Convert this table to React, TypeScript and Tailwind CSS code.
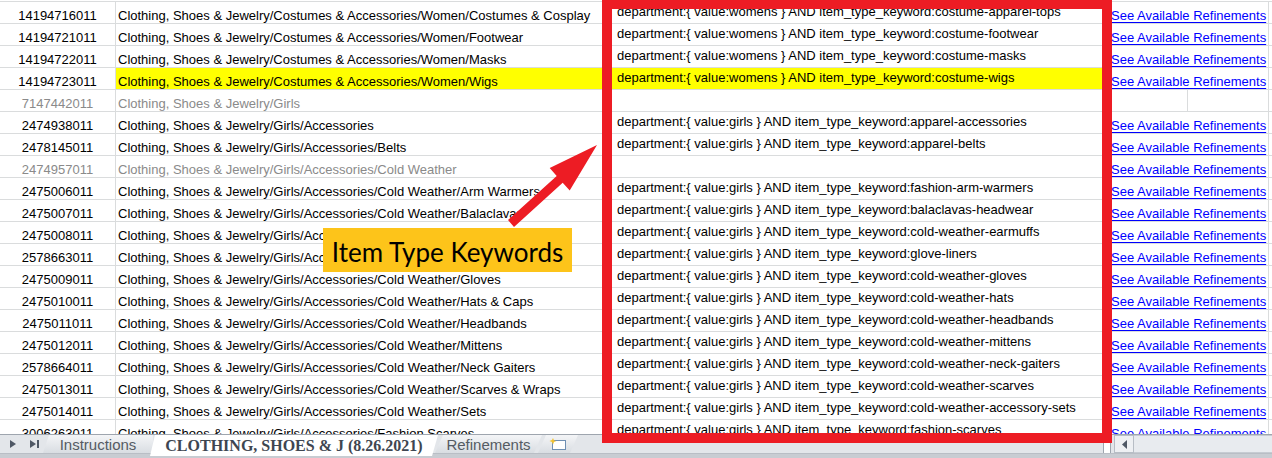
import React from 'react'

type Row = {
  id: string
  path: string
  query?: string
  link?: boolean
  muted?: boolean
  hl?: boolean
}

const G = 'Clothing, Shoes & Jewelry/Girls/Accessories/Cold Weather'
const qg = (k: string) => `department:{ value:girls } AND item_type_keyword:${k}`
const qw = (k: string) => `department:{ value:womens } AND item_type_keyword:${k}`

const rows: Row[] = [
  { id: '14194716011', path: 'Clothing, Shoes & Jewelry/Costumes & Accessories/Women/Costumes & Cosplay', query: qw('costume-apparel-tops'), link: true },
  { id: '14194721011', path: 'Clothing, Shoes & Jewelry/Costumes & Accessories/Women/Footwear', query: qw('costume-footwear'), link: true },
  { id: '14194722011', path: 'Clothing, Shoes & Jewelry/Costumes & Accessories/Women/Masks', query: qw('costume-masks'), link: true },
  { id: '14194723011', path: 'Clothing, Shoes & Jewelry/Costumes & Accessories/Women/Wigs', query: qw('costume-wigs'), link: true, hl: true },
  { id: '7147442011', path: 'Clothing, Shoes & Jewelry/Girls', muted: true },
  { id: '2474938011', path: 'Clothing, Shoes & Jewelry/Girls/Accessories', query: qg('apparel-accessories'), link: true },
  { id: '2478145011', path: 'Clothing, Shoes & Jewelry/Girls/Accessories/Belts', query: qg('apparel-belts'), link: true },
  { id: '2474957011', path: G, muted: true, link: true },
  { id: '2475006011', path: G + '/Arm Warmers', query: qg('fashion-arm-warmers'), link: true },
  { id: '2475007011', path: G + '/Balaclavas', query: qg('balaclavas-headwear'), link: true },
  { id: '2475008011', path: G + '/Earmuffs', query: qg('cold-weather-earmuffs'), link: true },
  { id: '2578663011', path: G + '/Glove Liners', query: qg('glove-liners'), link: true },
  { id: '2475009011', path: G + '/Gloves', query: qg('cold-weather-gloves'), link: true },
  { id: '2475010011', path: G + '/Hats & Caps', query: qg('cold-weather-hats'), link: true },
  { id: '2475011011', path: G + '/Headbands', query: qg('cold-weather-headbands'), link: true },
  { id: '2475012011', path: G + '/Mittens', query: qg('cold-weather-mittens'), link: true },
  { id: '2578664011', path: G + '/Neck Gaiters', query: qg('cold-weather-neck-gaiters'), link: true },
  { id: '2475013011', path: G + '/Scarves & Wraps', query: qg('cold-weather-scarves'), link: true },
  { id: '2475014011', path: G + '/Sets', query: qg('cold-weather-accessory-sets'), link: true },
  { id: '3006263011', path: 'Clothing, Shoes & Jewelry/Girls/Accessories/Fashion Scarves', query: qg('fashion-scarves'), link: true },
]

function SheetRow({ r }: { r: Row }) {
  const tone = r.muted ? 'text-[#8a8a8a]' : 'text-black'
  const hl = r.hl ? 'bg-[#ffff00]' : ''
  return (
    <div className="flex h-[22px] border-b border-[#dadcdd]">
      <div className={`flex w-[116px] shrink-0 items-end justify-center border-r border-[#dadcdd] leading-[15px] ${tone}`}>
        {r.id}
      </div>
      <div className={`flex w-[496px] shrink-0 items-end overflow-hidden whitespace-nowrap border-r border-[#dadcdd] pl-[2px] leading-[15px] ${tone} ${hl}`}>
        {r.path}
      </div>
      <div className={`flex w-[496px] shrink-0 items-end overflow-hidden whitespace-nowrap border-r border-[#dadcdd] pb-[4px] pl-[5px] leading-[15px] text-black ${hl}`}>
        {r.query}
      </div>
      {r.link ? (
        <div className="flex w-[161px] shrink-0 items-end whitespace-nowrap border-r border-[#dadcdd] pl-[3px] leading-[15px]">
          <span className="text-[#0000ff] underline decoration-1 underline-offset-[2px]">See Available Refinements</span>
        </div>
      ) : (
        <>
          <div className="w-[80px] shrink-0 border-r border-[#dadcdd]" />
          <div className="w-[81px] shrink-0 border-r border-[#dadcdd]" />
        </>
      )}
      <div className="flex-1" />
    </div>
  )
}

function TabBar() {
  return (
    <div className="flex h-[24px] flex-col border-t border-[#9ea5ae] bg-[#e3e6ea]">
      <div className="flex h-[18px] items-stretch">
        <div className="flex w-[43px] shrink-0 items-center gap-[14px] pl-[10px] text-[#4f5865]">
          <svg width="6" height="8" viewBox="0 0 6 8">
            <path d="M0 0 L6 4 L0 8 Z" fill="currentColor" />
          </svg>
          <svg width="9" height="8" viewBox="0 0 9 8">
            <path d="M0 0 L6 4 L0 8 Z M7 0 H9 V8 H7 Z" fill="currentColor" />
          </svg>
        </div>
        <div className="flex w-[110px] shrink-0 items-center justify-center bg-gradient-to-b from-[#f4f5f7] to-[#d9dde2] pt-[2px] text-[15px] text-[#555b63] [clip-path:polygon(6px_0,100%_0,100%_100%,0_100%)]">
          Instructions
        </div>
        <div className="-ml-[3px] flex h-[21px] w-[288px] shrink-0 items-center justify-center bg-white pt-[1px] font-['Liberation_Serif',serif] text-[16px] font-bold text-[#3e4651] [clip-path:polygon(5px_0,100%_0,calc(100%-6px)_100%,0_100%)]">
          CLOTHING, SHOES &amp; J (8.26.2021)
        </div>
        <div className="-ml-[3px] flex w-[107px] shrink-0 items-center justify-center bg-gradient-to-b from-[#f4f5f7] to-[#d9dde2] pt-[2px] text-[15px] text-[#555b63] [clip-path:polygon(8px_0,100%_0,calc(100%-8px)_100%,0_100%)]">
          Refinements
        </div>
        <div className="-ml-[4px] flex w-[40px] shrink-0 items-center justify-center bg-gradient-to-b from-[#f4f5f7] to-[#d9dde2] [clip-path:polygon(8px_0,100%_0,calc(100%-8px)_100%,0_100%)]">
          <svg width="18" height="14" viewBox="0 0 18 14">
            <rect x="3.5" y="3.5" width="13" height="9" fill="#fff" stroke="#6f8fb3" />
            <path d="M4 1 L5 3.5 L7.5 4 L5 5 L4 7.5 L3 5 L0.5 4 L3 3 Z" fill="#f2c230" />
          </svg>
        </div>
        <div className="flex-1" />
        <div className="flex w-[169px] shrink-0 items-stretch">
          <div className="w-[8px] border-x border-[#9ea5ae] bg-white" />
          <div className="ml-[3px] flex w-[20px] items-center justify-center border border-[#b7bdc5] bg-[#eef0f3]">
            <svg width="5" height="9" viewBox="0 0 5 9">
              <path d="M5 0 L0 4.5 L5 9 Z" fill="#4f5865" />
            </svg>
          </div>
          <div className="flex-1 border-y border-[#c6cbd2] bg-[#e8ebef]" />
        </div>
      </div>
      <div className="h-[5px] border-t border-[#b9bec5] bg-[#c8ccd2]" />
    </div>
  )
}

export default function App() {
  return (
    <div className="relative h-[458px] w-[1272px] overflow-hidden bg-white font-['Liberation_Sans',Arial,sans-serif] text-[13px]">
      <div className="h-[434px] overflow-hidden">
        <div className="h-[2px] border-b border-[#dadcdd]" />
        {rows.map((r) => (
          <SheetRow key={r.id} r={r} />
        ))}
      </div>
      <TabBar />

      {/* annotation overlays */}
      <div className="absolute left-[602px] top-0 h-[443px] w-[510px] border-[10px] border-t-[9px] border-[#ed1c24]" />
      <svg className="absolute left-0 top-0" width="1272" height="458">
        <polygon
          points="508,220 556.7,176 549.7,168 597,145 569.7,190.6 562.7,182.8 514,227"
          fill="#ed1c24"
        />
      </svg>
      <div className="absolute left-[323px] top-[228px] flex h-[44px] w-[249px] items-center justify-center bg-[#fdc41a] pt-[5px] font-['Lato',sans-serif] text-[26px] text-black">
        Item Type Keywords
      </div>
    </div>
  )
}
